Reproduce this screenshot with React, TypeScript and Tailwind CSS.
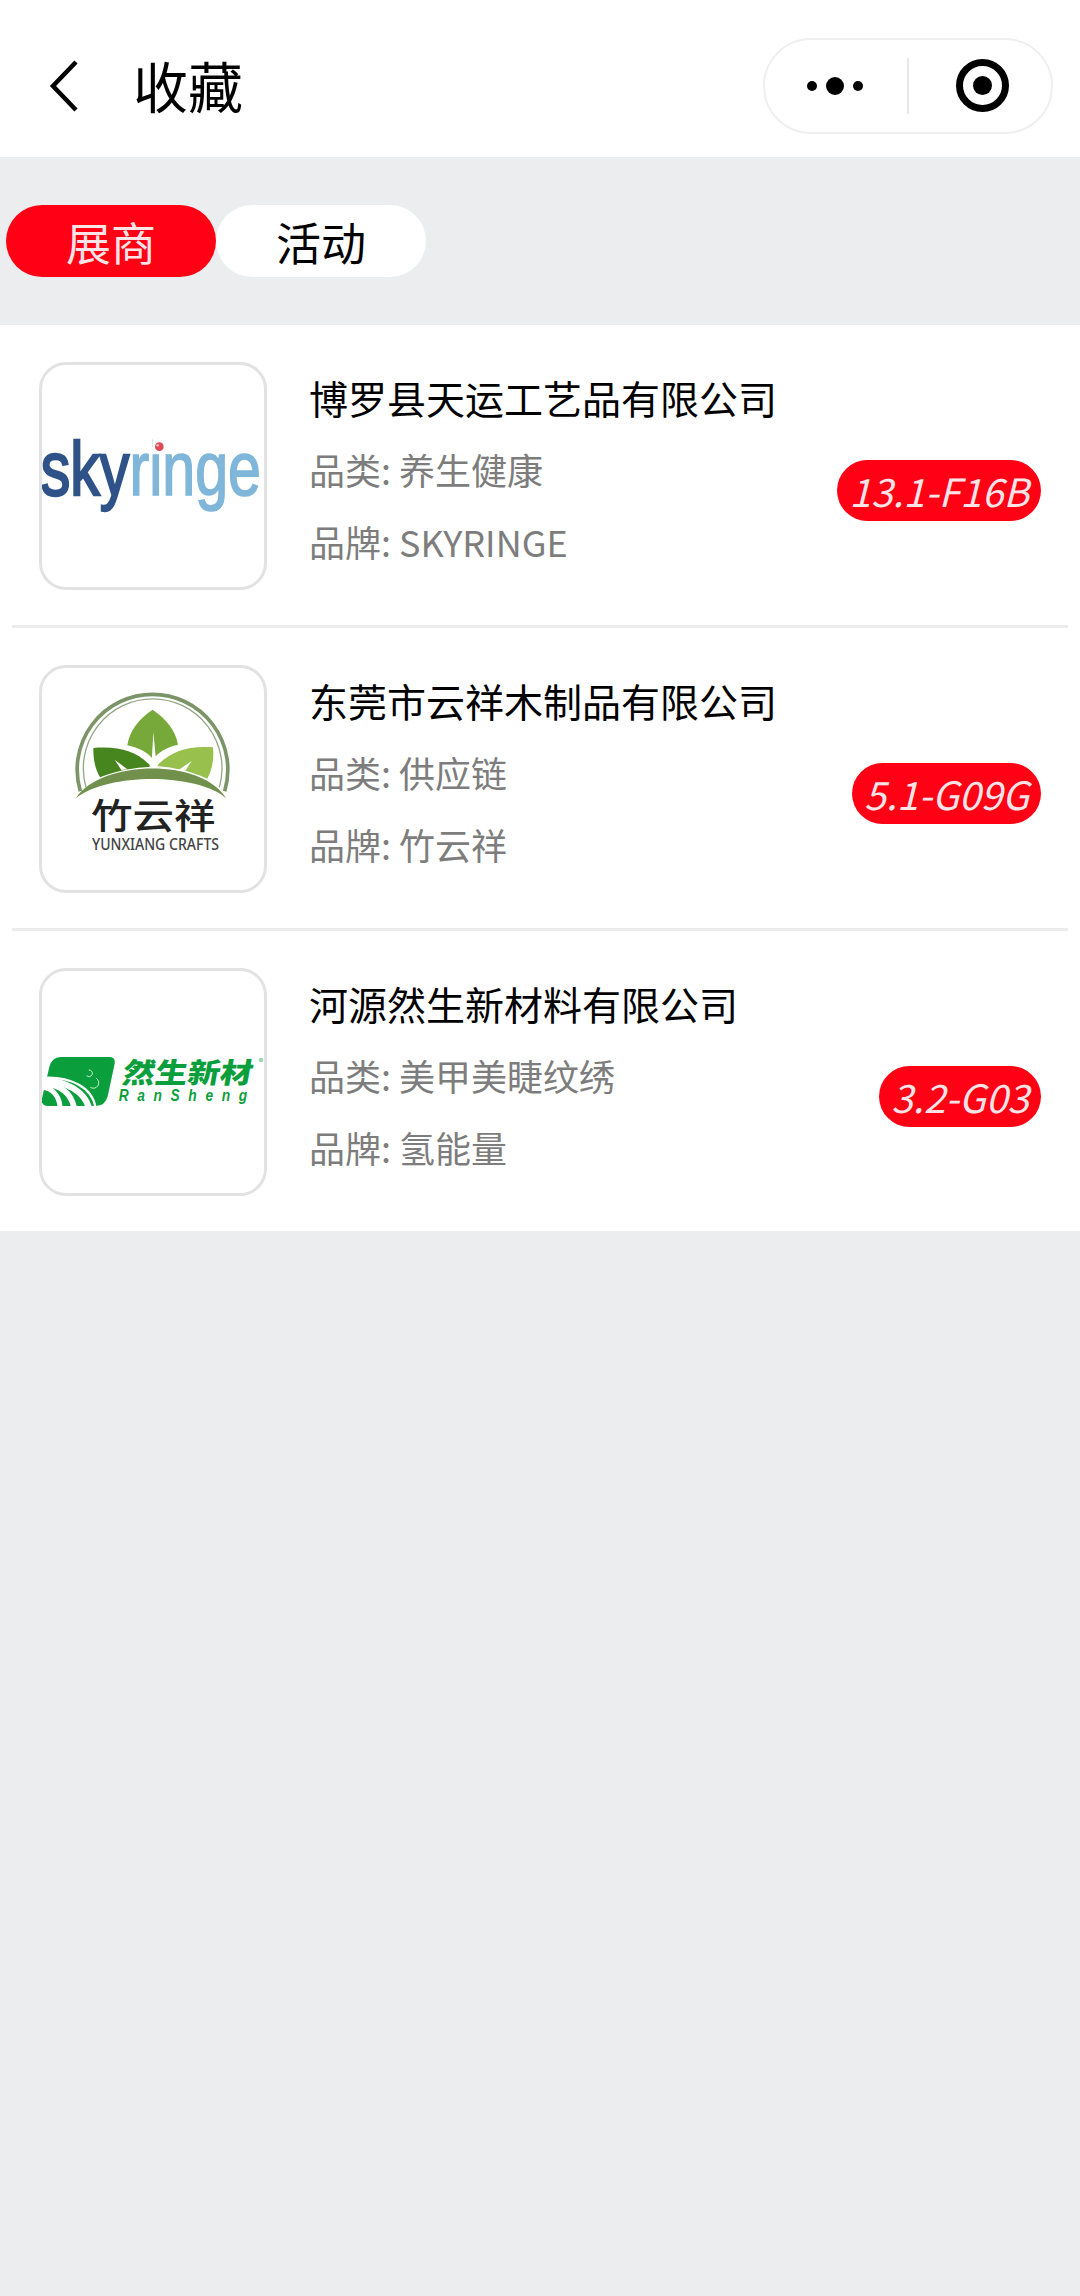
import type { ReactNode } from "react";

const cjk = "font-['Noto_Sans_CJK_SC',sans-serif]";

function SkyringeLogo() {
  return (
    <svg viewBox="66 45 666 666" className="size-full">
      <text
        x="62"
        y="435"
        fontFamily="'Liberation Sans', sans-serif"
        fontSize="226"
        strokeWidth="7"
        textLength="661"
        lengthAdjust="spacingAndGlyphs"
      >
        <tspan fill="#2f5288" stroke="#2f5288">sky</tspan>
        <tspan fill="#7fb6d9" stroke="#7fb6d9" strokeWidth="5">ringe</tspan>
      </text>
      <rect x="398" y="255" width="40" height="52" fill="#fff" />
      <circle cx="418" cy="290" r="13" fill="#dd4b58" />
      <circle cx="413" cy="286" r="4" fill="#f3b5b5" />
    </svg>
  );
}

function YunxiangLogo() {
  return (
    <svg viewBox="66 54 666 666" className="size-full">
      <path d="M181 424 A226 226 0 1 1 614 424" fill="none" stroke="#7b9468" strokeWidth="11" />
      <path d="M198 412 A208 208 0 1 1 598 412" fill="none" stroke="#93a884" strokeWidth="4" />
      <path d="M398 179 C440 207 468 244 474 284 C442 290 414 308 399 328 C384 306 352 292 322 286 C328 244 356 206 398 179Z" fill="#76a83a" />
      <path d="M220 294 C300 288 352 304 394 350 C342 352 290 362 240 382 C224 354 220 326 220 294Z" fill="#47851f" />
      <path d="M579 292 C510 286 452 302 410 348 C464 352 512 364 562 386 C578 356 582 324 579 292Z" fill="#98c04d" />
      <path d="M400 246 L407 320 L414 350 L388 350 L396 320Z" fill="#fff" />
      <path d="M284 329 L322 358 L304 360Z M515 333 L476 360 L496 362Z" fill="#fff" />
      <path d="M168 444 C240 332 540 320 618 444 C530 370 270 366 168 444Z" fill="#71904b" />
      <text x="213" y="538" fontFamily="'Noto Sans CJK SC', sans-serif" fontWeight="500" fontSize="106" fill="#222" textLength="374" lengthAdjust="spacingAndGlyphs">
        竹云祥
      </text>
      <text x="216" y="601" fontFamily="'Noto Sans', sans-serif" fontWeight="500" fontSize="49" fill="#444" textLength="381" lengthAdjust="spacingAndGlyphs">
        YUNXIANG CRAFTS
      </text>
    </svg>
  );
}

function RanshengLogo() {
  return (
    <svg viewBox="66 48 666 666" className="size-full">
      <path d="M122 306 H268 Q287 306 284 326 L263 424 Q256 453 226 453 H84 Q62 453 66 430 L88 336 Q96 306 122 306Z" fill="#0a9f3c" />
      <g fill="none" stroke="#fff">
        <path d="M78 368 C150 366 216 396 226 456" strokeWidth="7" />
        <path d="M78 376 C140 380 192 410 206 456" strokeWidth="19" />
        <path d="M72 386 C120 390 152 414 162 456" strokeWidth="17" />
        <path d="M66 397 C98 398 118 424 120 456" strokeWidth="15" />
      </g>
      <g fill="none" stroke="#c9efcf" strokeWidth="3">
        <path d="M206 345 A10 10 0 1 1 200 362" />
        <path d="M229 370 A16 16 0 1 1 211 397" />
      </g>
      <g fill="#0a9f3c">
        <text transform="translate(304 383) skewX(-10)" x="0" y="0" fontFamily="'Noto Sans CJK SC', sans-serif" fontWeight="900" fontSize="84" textLength="390" lengthAdjust="spacingAndGlyphs">
          然生新材
        </text>
        <text transform="translate(296 438) scale(0.86 1)" x="0" y="0" fontFamily="'Liberation Sans', sans-serif" fontWeight="700" fontStyle="italic" fontSize="48" textLength="448" lengthAdjust="spacing">
          RanSheng
        </text>
      </g>
      <circle cx="723" cy="315" r="7" fill="#9fd8b0" />
    </svg>
  );
}

type Exhibitor = { name: string; category: string; brand: string; booth: string; logo: ReactNode };

const exhibitors: Exhibitor[] = [
  { name: "博罗县天运工艺品有限公司", category: "养生健康", brand: "SKYRINGE", booth: "13.1-F16B", logo: <SkyringeLogo /> },
  { name: "东莞市云祥木制品有限公司", category: "供应链", brand: "竹云祥", booth: "5.1-G09G", logo: <YunxiangLogo /> },
  { name: "河源然生新材料有限公司", category: "美甲美睫纹绣", brand: "氢能量", booth: "3.2-G03", logo: <RanshengLogo /> },
];

function ExhibitorRow({ item }: { item: Exhibitor }) {
  return (
    <li className="mx-3 flex border-b-3 border-[#ececec] px-[27px] pt-[37px] pb-[35px] last:border-b-0">
      <div className="size-[228px] shrink-0 overflow-hidden rounded-[27px] border-3 border-[#e2e2e2]">{item.logo}</div>
      <div className="ml-[42px] flex-1 whitespace-nowrap text-[36px] leading-[72px] text-[#7d7d7d]">
        <h2 className="-mt-px text-[39px] leading-[72px] text-black">{item.name}</h2>
        <p>品类: {item.category}</p>
        <p>品牌: {item.brand}</p>
      </div>
      <span className="mt-[98px] h-[61px] rounded-full bg-[#ff0014] px-3 text-[39px] leading-[61px] text-[#ffe3e6] italic">
        {item.booth}
      </span>
    </li>
  );
}

export default function App() {
  return (
    <div className={`${cjk} min-h-[2296px] w-[1080px] bg-[#ebedee] text-black`}>
      <header className="flex h-[157px] items-center bg-white pt-[14px] pr-[27px] pl-[48px]">
        <svg viewBox="0 0 32 56" className="h-14 w-8" fill="none" stroke="#000" strokeWidth="4.5">
          <path d="M28 4 L5 28 L28 52" />
        </svg>
        <h1 className="mb-[4px] ml-[53px] text-[55px] leading-[80px]">收藏</h1>
        <div className="ml-auto flex h-24 w-[290px] items-center rounded-full border-2 border-[#efefef]">
          <div className="flex w-[142px] items-center justify-center gap-[9px] pr-[2px]">
            <i className="size-[10px] rounded-full bg-black" />
            <i className="size-[18px] rounded-full bg-black" />
            <i className="size-[10px] rounded-full bg-black" />
          </div>
          <div className="h-14 w-[2px] bg-[#e8e8e8]" />
          <div className="ml-[47px] flex size-[53px] items-center justify-center rounded-full border-[7px] border-black">
            <i className="size-[19px] rounded-full bg-black" />
          </div>
        </div>
      </header>

      <nav className="flex h-[168px] items-center pl-[6px] text-center text-[45px] leading-[74px]">
        <button className="h-[72px] w-[210px] rounded-full bg-[#ff0014] text-[#ffe3e6]">展商</button>
        <button className="h-[72px] w-[210px] rounded-full bg-white">活动</button>
      </nav>

      <ul className="bg-white">
        {exhibitors.map((item) => (
          <ExhibitorRow key={item.booth} item={item} />
        ))}
      </ul>
    </div>
  );
}
